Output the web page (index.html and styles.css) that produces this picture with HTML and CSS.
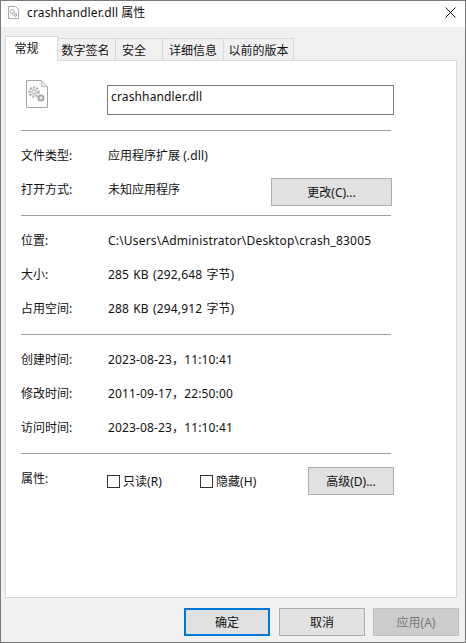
FILE: index.html
```html
<!DOCTYPE html>
<html lang="zh">
<head>
<meta charset="utf-8">
<title>crashhandler.dll 属性</title>
<link rel="stylesheet" href="styles.css">
</head>
<body>
<div class="window">
  <header class="titlebar">
    <svg class="title-icon" viewBox="0 0 11 13" width="11" height="13">
      <path d="M.5.5H7.5L10.5 3.5V12.5H.5Z" fill="#fff" stroke="#a8a8a8"/>
      <circle cx="4.2" cy="5.6" r="1.9" fill="none" stroke="#aaa" stroke-width="1.4" stroke-dasharray="1.2 .5"/>
      <circle cx="7.3" cy="8.8" r="1.3" fill="none" stroke="#aaa" stroke-width="1.1"/>
    </svg>
    <span class="title-text"><span class="lat">crashhandler.dll</span> 属性</span>
    <svg class="close" viewBox="0 0 11 11" width="11" height="11"><path d="M.5.5 10.5 10.5M10.5.5.5 10.5" stroke="#111" stroke-width="1" fill="none"/></svg>
  </header>
  <main class="client">
    <nav class="tabs">
      <div class="tab active">常规</div>
      <div class="tab t2">数字签名</div>
      <div class="tab t3">安全</div>
      <div class="tab t4">详细信息</div>
      <div class="tab t5">以前的版本</div>
    </nav>
    <section class="panel">
      <div class="head">
        <svg class="file-icon" viewBox="0 0 22 28" width="22" height="28">
          <path d="M.5.5H15.5L21.5 6.5V27.5H.5Z" fill="#fdfdfd" stroke="#a6a6a6"/>
          <path d="M15.5.5V6.5H21.5" fill="#ececec" stroke="#c0c0c0"/>
          <circle cx="8" cy="12" r="4.4" fill="none" stroke="#b3b7ba" stroke-width="2.8" stroke-dasharray="2 1.2"/>
          <circle cx="8" cy="12" r="2.2" fill="#e9ebed" stroke="#a0a5a9" stroke-width=".8"/>
          <circle cx="15" cy="18" r="2.6" fill="#e6e8ea" stroke="#a0a5a9" stroke-width="1.8"/>
        </svg>
        <div class="name-box"><span class="lat">crashhandler.dll</span></div>
      </div>
      <hr class="rule">
      <div class="group g1">
        <div class="row"><span class="label">文件类型:</span><span>应用程序扩展 <span class="lat">(.dll)</span></span></div>
        <div class="row"><span class="label">打开方式:</span><span>未知应用程序</span><button class="btn change">更改(C)...</button></div>
      </div>
      <hr class="rule">
      <div class="group g2">
        <div class="row"><span class="label">位置:</span><span class="path">C:\Users\Administrator\Desktop\crash_83005</span></div>
        <div class="row"><span class="label">大小:</span><span><span class="lat wide">285 KB (292,648 </span>字节)</span></div>
        <div class="row"><span class="label">占用空间:</span><span><span class="lat wide">288 KB (294,912 </span>字节)</span></div>
      </div>
      <hr class="rule">
      <div class="group g2">
        <div class="row"><span class="label">创建时间:</span><span><span class="lat">2023-08-23，11:10:41</span></span></div>
        <div class="row"><span class="label">修改时间:</span><span><span class="lat">2011-09-17，22:50:00</span></span></div>
        <div class="row"><span class="label">访问时间:</span><span><span class="lat">2023-08-23，11:10:41</span></span></div>
      </div>
      <hr class="rule">
      <div class="attrs">
        <span class="label attr-label">属性:</span>
        <label class="check c1"><i class="box"></i><span>只读<span class="lat">(R)</span></span></label>
        <label class="check c2"><i class="box"></i><span>隐藏<span class="lat">(H)</span></span></label>
        <button class="btn advanced">高级(D)...</button>
      </div>
    </section>
    <footer class="actions">
      <button class="btn action ok">确定</button>
      <button class="btn action">取消</button>
      <button class="btn action disabled">应用(A)</button>
    </footer>
  </main>
</div>
</body>
</html>
```

FILE: styles.css
```css
* { box-sizing: border-box; }
html, body { margin: 0; padding: 0; }
body {
  width: 466px;
  height: 643px;
  overflow: hidden;
  background: #fff;
  font-family: "Noto Sans", "Noto Sans CJK SC", sans-serif;
  font-size: 12px;
  color: #111;
}
.lat { letter-spacing: .14px; }
.wide { word-spacing: 1px; }
.path { letter-spacing: .19px; }
.window {
  width: 466px;
  height: 643px;
  border: 1px solid #7a7a7a;
  display: flex;
  flex-direction: column;
}
.titlebar {
  height: 26px;
  flex: none;
  background: #fff;
  display: flex;
  align-items: center;
  padding: 0 9px 4px 7px;
  gap: 8px;
  color: #111;
}
.title-icon { flex: none; }
.title-text { flex: 1; font-size: 12px; }
.close { flex: none; }
.client {
  flex: 1;
  background: #f0f0f0;
  padding: 9px 8px 5px 4px;
  display: flex;
  flex-direction: column;
}
.tabs {
  display: flex;
  align-items: flex-end;
  height: 25px;
  flex: none;
  position: relative;
  z-index: 1;
  margin-bottom: -1px;
}
.tab {
  height: 23px;
  border: 1px solid #d9d9d9;
  border-left: 0;
  display: flex;
  align-items: center;
  justify-content: center;
  background: #f0f0f0;
  padding-top: 1px;
}
.tab.active {
  width: 53px;
  height: 25px;
  background: #fff;
  border-left: 1px solid #d9d9d9;
  border-bottom: 0;
  padding: 0 10px 3px 0;
}
.t2 { width: 58px; padding-right: 2px; }
.t3 { width: 47px; justify-content: flex-start; padding-left: 6px; }
.t4 { width: 61px; }
.t5 { width: 70px; }
.panel {
  flex: 1;
  min-height: 0;
  background: #fff;
  border: 1px solid #d9d9d9;
  padding: 0 65px 0 15px;
  width: 452px;
}
.head {
  height: 69px;
  display: flex;
  align-items: flex-start;
  padding: 19px 0 0 5px;
  margin-right: -3px;
}
.file-icon { flex: none; margin-right: 59px; }
.name-box {
  width: 287px;
  height: 30px;
  margin-top: 5px;
  border: 1px solid #7a7a7a;
  padding: 0 3px;
  line-height: 22px;
  flex: none;
}
.rule {
  margin: 0;
  border: 0;
  height: 1px;
  width: 370px;
  background: #a0a0a0;
}
.group { display: flex; flex-direction: column; }
.g1 { height: 84px; padding-top: 7px; }
.g2 { height: 118px; padding-top: 7px; }
.row {
  height: 34px;
  display: flex;
  align-items: center;
}
.label { width: 87px; flex: none; }
.btn {
  font: inherit;
  color: #111;
  background: #e1e1e1;
  border: 1px solid #adadad;
  padding: 0;
  height: 28px;
  flex: none;
}
.change { width: 121px; margin-left: auto; margin-right: -1px; margin-top: 6px; }
.attrs {
  height: 60px;
  display: flex;
  align-items: flex-start;
  padding-top: 13px;
}
.attr-label { margin-top: 2px; }
.check {
  display: flex;
  align-items: center;
  gap: 3px;
  height: 28px;
  width: 93px;
}
.c2 { width: 108px; }
.box {
  width: 13px;
  height: 13px;
  border: 1px solid #333;
  background: #fff;
  flex: none;
}
.c1 { margin-left: -1px; }
.advanced { width: 86px; margin-right: -3px; }
.actions {
  flex: none;
  display: flex;
  justify-content: flex-end;
  gap: 9px;
  padding-top: 10px;
  height: 39px;
  margin-right: -2px;
}
.action { width: 86px; }
.ok { border: 2px solid #0078d7; }
.disabled { background: #ccc; border-color: #bfbfbf; color: #787878; margin-left: -1px; }
```
